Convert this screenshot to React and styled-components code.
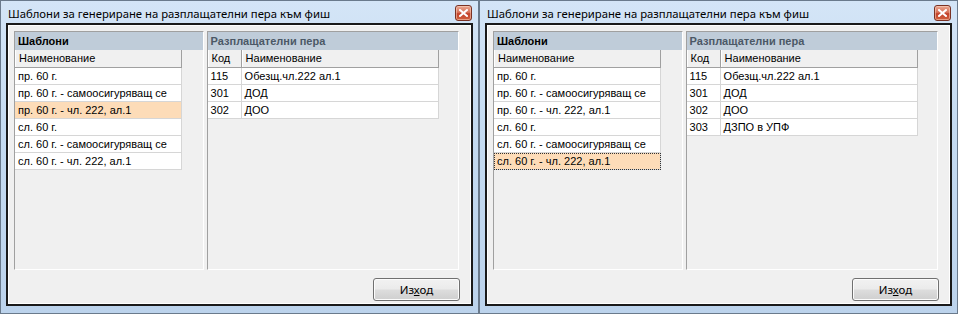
import React from "react";
import styled, { createGlobalStyle } from "styled-components";

const Global = createGlobalStyle`
  html, body { margin: 0; padding: 0; background: #ffffff; }
  body { font-family: "Liberation Sans", Arial, sans-serif; }
`;

const Page = styled.div`
  display: flex;
  width: 958px;
  height: 314px;
`;

const Window = styled.div`
  box-sizing: border-box;
  width: 479px;
  height: 314px;
  border: 1px solid #6a7a8c;
  background: linear-gradient(180deg, #d4e5f7 0%, #c5dbf1 40%, #bcd3ec 100%);
  display: flex;
  flex-direction: column;
  padding: 0 5px 7px 5px;
`;

const TitleBar = styled.div`
  height: 22px;
  display: flex;
  align-items: center;
  justify-content: space-between;
  padding-left: 2px;
`;

const TitleText = styled.span`
  font-family: "Noto Sans", "Open Sans", sans-serif;
  font-size: 11.3px;
  color: #000;
  position: relative;
  top: 1px;
`;

const CloseButton = styled.div`
  box-sizing: border-box;
  width: 17px;
  height: 16px;
  margin-top: 2px;
  margin-right: 1px;
  border: 1px solid #7a3224;
  border-radius: 3px;
  background: linear-gradient(180deg, #e9a792 0%, #d8735a 45%, #c2412a 55%, #d0603e 100%);
  display: flex;
  align-items: center;
  justify-content: center;
  box-shadow: inset 0 0 0 1px rgba(255, 220, 200, 0.5);
`;

const Client = styled.div`
  flex: 1;
  border: 2px solid #1a1a1a;
  box-shadow: inset 0 0 0 1px #ffffff;
  background: #f0f0f0;
  display: flex;
  flex-direction: column;
  padding: 6px 12px 1px 6px;
`;

const Panels = styled.div`
  display: flex;
  gap: 3px;
  height: 239px;
`;

const Panel = styled.div`
  box-sizing: border-box;
  width: ${(p) => p.$width}px;
  border-top: 1px solid #a0a0a0;
  border-left: 1px solid #a0a0a0;
  border-right: 1px solid #ffffff;
  border-bottom: 1px solid #ffffff;
  display: flex;
  flex-direction: column;
`;

const PanelHeader = styled.div`
  height: 18px;
  line-height: 18px;
  background: #bfccd9;
  font-weight: bold;
  font-size: 11px;
  padding-left: 3px;
  color: ${(p) => (p.$active ? "#000000" : "#4b5866")};
`;

const Table = styled.div`
  width: ${(p) => p.$width}px;
  display: flex;
  flex-direction: column;
`;

const HeadRow = styled.div`
  display: flex;
  height: 18px;
  border-bottom: 1px solid #a0a0a0;
  box-sizing: border-box;
`;

const HeadCell = styled.div`
  box-sizing: border-box;
  width: ${(p) => p.$width}px;
  flex: ${(p) => (p.$width ? "none" : "1")};
  border-right: 1px solid #a0a0a0;
  border-left: 1px solid #ffffff;
  font-size: 11px;
  line-height: 17px;
  padding-left: 3px;
  color: #000;
  white-space: nowrap;
`;

const Row = styled.div`
  display: flex;
  height: 17px;
  box-sizing: border-box;
  border-bottom: 1px solid #d6d6d6;
  border-right: 1px solid #d6d6d6;
  background: ${(p) => (p.$selected ? "#fddcb8" : "#ffffff")};
  outline: ${(p) => (p.$focused ? "1px dotted #333" : "none")};
  outline-offset: -1px;
`;

const Cell = styled.div`
  box-sizing: border-box;
  width: ${(p) => p.$width}px;
  flex: ${(p) => (p.$width ? "none" : "1")};
  border-right: ${(p) => (p.$sep ? "1px solid #d6d6d6" : "none")};
  font-size: 11px;
  line-height: 16px;
  padding-left: 3px;
  color: #000;
  white-space: nowrap;
  overflow: hidden;
`;

const ButtonRow = styled.div`
  display: flex;
  justify-content: flex-end;
  margin-top: 8px;
`;

const Button = styled.button`
  box-sizing: border-box;
  width: 87px;
  height: 23px;
  border: 1px solid #707070;
  border-radius: 3px;
  background: linear-gradient(180deg, #f2f2f2 0%, #ebebeb 48%, #dddddd 52%, #cfcfcf 100%);
  box-shadow: inset 0 0 0 1px #fcfcfc;
  font-family: "Noto Sans", "Open Sans", sans-serif;
  font-size: 11.5px;
  color: #000;
  padding: 0;
  margin-right: -1px;
`;

const templates = [
  "пр. 60 г.",
  "пр. 60 г. - самоосигуряващ се",
  "пр. 60 г. - чл. 222, ал.1",
  "сл. 60 г.",
  "сл. 60 г. - самоосигуряващ се",
  "сл. 60 г. - чл. 222, ал.1",
];

const payItems = [
  ["115", "Обезщ.чл.222 ал.1"],
  ["301", "ДОД"],
  ["302", "ДОО"],
  ["303", "ДЗПО в УПФ"],
];

function CloseIcon() {
  return (
    <svg width="9" height="8" viewBox="0 0 9 8">
      <path d="M1 1 L8 7 M8 1 L1 7" stroke="#ffffff" strokeWidth="2" strokeLinecap="square" />
    </svg>
  );
}

function Dialog({ selected, focused, payCount }) {
  return (
    <Window>
      <TitleBar>
        <TitleText>Шаблони за генериране на разплащателни пера към фиш</TitleText>
        <CloseButton>
          <CloseIcon />
        </CloseButton>
      </TitleBar>
      <Client>
        <Panels>
          <Panel $width={190}>
            <PanelHeader $active>Шаблони</PanelHeader>
            <Table $width={167}>
              <HeadRow>
                <HeadCell $width={167}>Наименование</HeadCell>
              </HeadRow>
              {templates.map((t, i) => (
                <Row key={t} $selected={i === selected} $focused={focused && i === selected}>
                  <Cell>{t}</Cell>
                </Row>
              ))}
            </Table>
          </Panel>
          <Panel $width={253}>
            <PanelHeader>Разплащателни пера</PanelHeader>
            <Table $width={231}>
              <HeadRow>
                <HeadCell $width={34}>Код</HeadCell>
                <HeadCell>Наименование</HeadCell>
              </HeadRow>
              {payItems.slice(0, payCount).map(([code, name]) => (
                <Row key={code}>
                  <Cell $width={34} $sep>
                    {code}
                  </Cell>
                  <Cell>{name}</Cell>
                </Row>
              ))}
            </Table>
          </Panel>
        </Panels>
        <ButtonRow>
          <Button>
            Из<u>х</u>од
          </Button>
        </ButtonRow>
      </Client>
    </Window>
  );
}

export default function App() {
  return (
    <>
      <Global />
      <Page>
        <Dialog selected={2} focused={false} payCount={3} />
        <Dialog selected={5} focused payCount={4} />
      </Page>
    </>
  );
}
